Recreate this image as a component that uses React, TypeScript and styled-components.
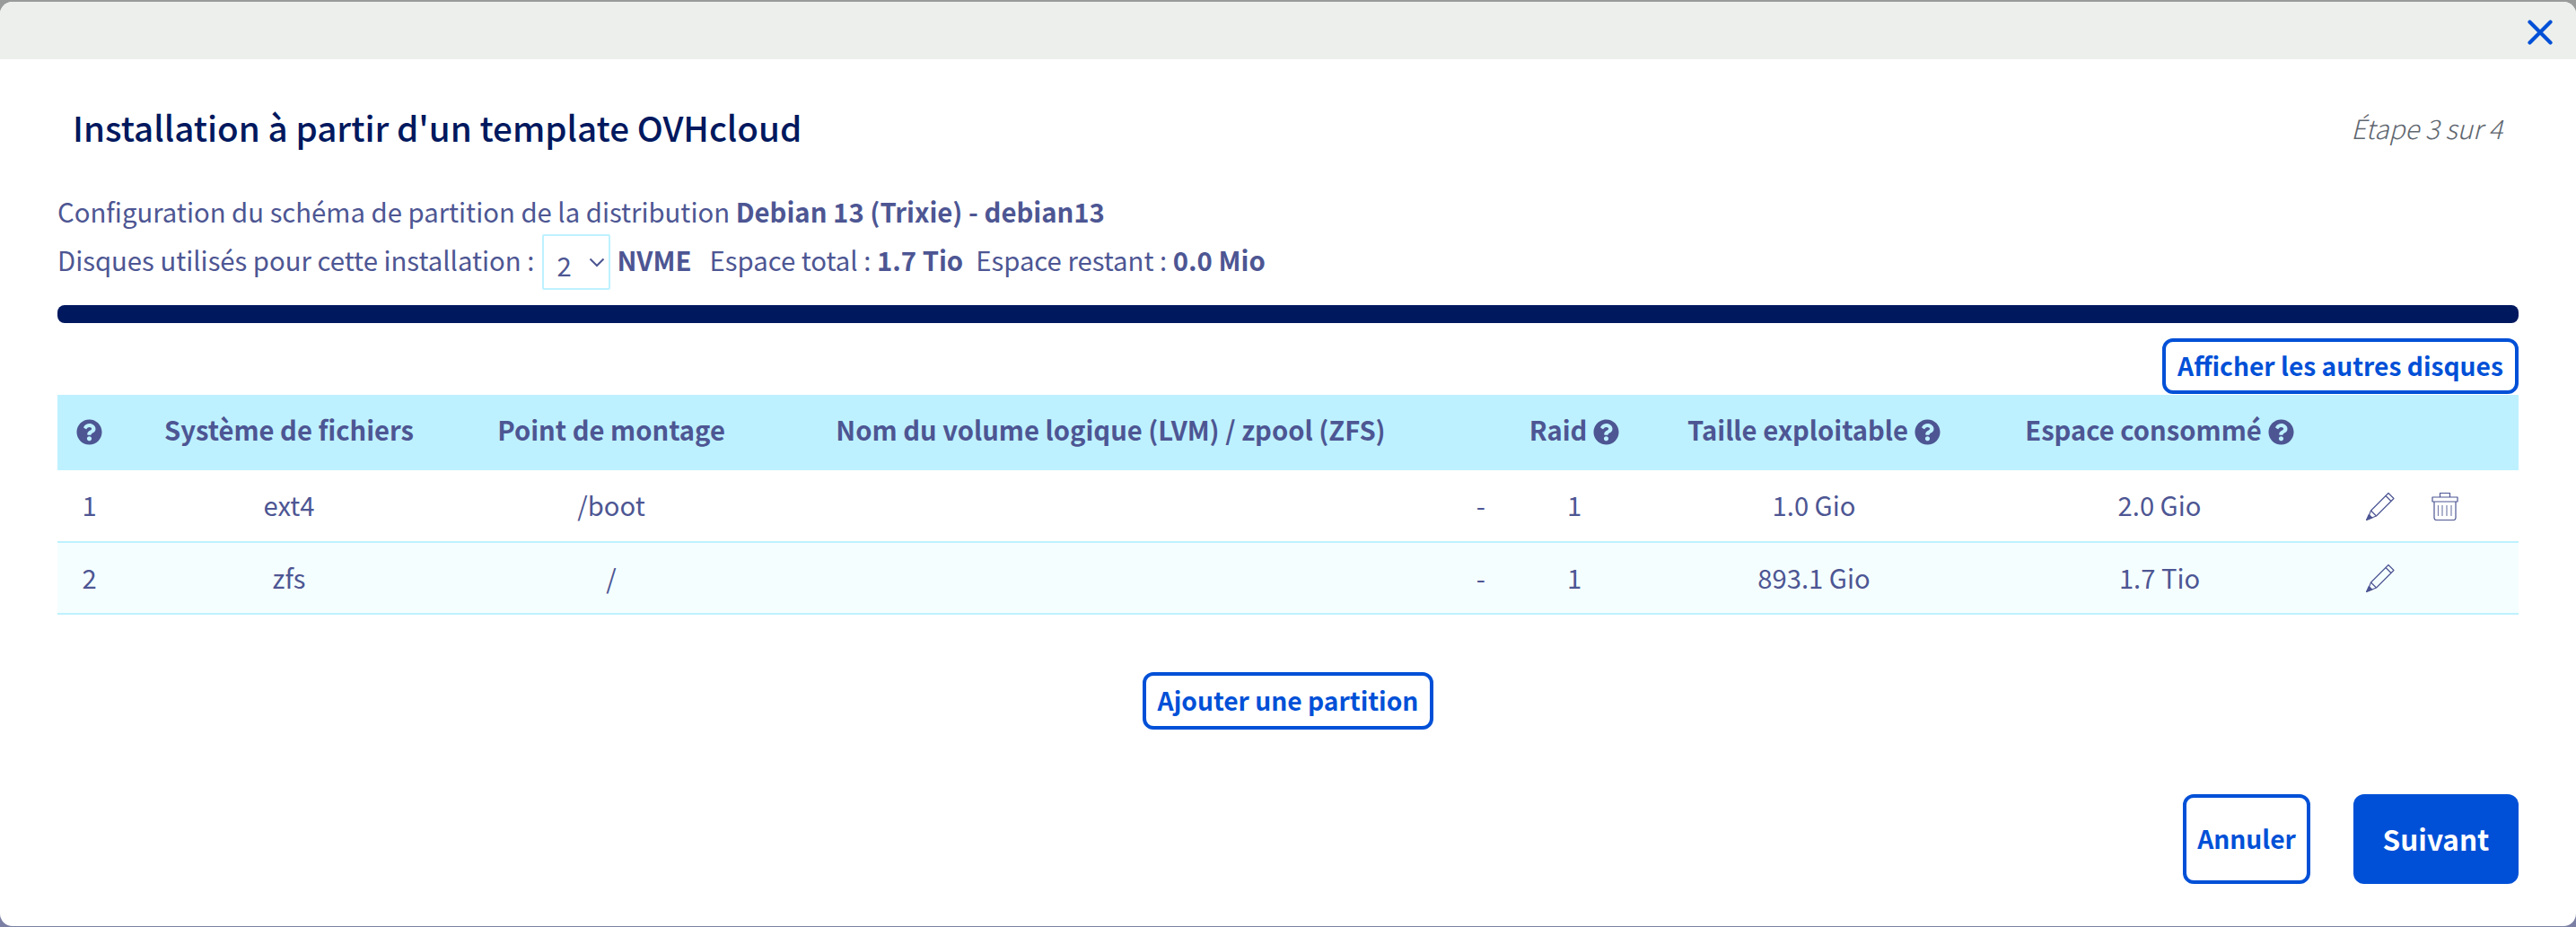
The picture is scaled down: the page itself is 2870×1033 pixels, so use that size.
import React from "react";
import styled, { createGlobalStyle } from "styled-components";
import { FaQuestionCircle } from "react-icons/fa";

const Global = createGlobalStyle`
  html, body { margin: 0; padding: 0; }
  body {
    width: 2870px; height: 1033px; overflow: hidden;
    background: linear-gradient(#999b9b 0, #999b9b 50%, #7c80a4 50%, #7c80a4 100%);
    font-family: "Noto Sans CJK SC", "Open Sans", sans-serif;
    color: #4d5693;
  }
  * { box-sizing: border-box; }
`;

const Modal = styled.div`
  margin-top: 2px; width: 2870px; height: 1030px; background: #fff;
  border-radius: 14px; overflow: hidden; display: flex; flex-direction: column;
`;
const TopBar = styled.div`
  height: 64px; background: #edefec; display: flex; justify-content: flex-end; align-items: center;
  padding-right: 26px; flex: none;
`;
const CloseBtn = styled.svg`
  width: 28px; height: 28px; margin-top: 3px; display: block;
`;
const Body = styled.div`
  padding: 0 64px; display: flex; flex-direction: column; flex: 1;
`;
const TitleRow = styled.div`
  display: flex; justify-content: space-between; align-items: center; height: 100px; margin-top: 26px;
  padding-left: 17px; padding-right: 18px;
`;
const Title = styled.h1`
  margin: 0 0 3px; font-size: 38.6px; font-weight: 500; line-height: 50px; color: #00185e;
`;
const Step = styled.span`
  font-size: 29.6px; font-style: italic; font-weight: 300; color: #5f6770; line-height: 40px; margin-top: 2px;
`;
const Line = styled.div`
  font-size: 29.3px; line-height: 40px; font-weight: 400; margin: 23px 0 2px; white-space: nowrap;
  strong { font-weight: 700; }
`;
const DiskLine = styled.div`
  display: flex; align-items: center; height: 62px; padding-bottom: 6px; font-size: 29.3px; white-space: nowrap; margin-top: 4px;
  strong { font-weight: 700; }
`;
const SelectWrap = styled.div`
  position: relative; width: 76px; height: 62px; margin: 0 7px -6px 9px; flex: none;
`;
const Select = styled.select`
  appearance: none; width: 100%; height: 100%; border: 2px solid #bef1ff; border-radius: 2px; background: #fff;
  color: #4d5693; font: 400 29.3px "Noto Sans CJK SC", sans-serif; padding: 6px 0 0 14px; outline: none;
`;
const Chevron = styled.svg`
  position: absolute; top: 26px; left: 52px; width: 18px; height: 11px; pointer-events: none;
`;
const Gap = styled.span<{ $w: number }>`
  display: inline-block; width: ${(p) => p.$w}px;
`;
const Bar = styled.div`
  height: 20px; background: #00185e; border-radius: 8px; margin-top: 17px; flex: none;
`;
const RightRow = styled.div`
  display: flex; justify-content: flex-end; margin-top: 17px; margin-bottom: 1px;
`;
const OutlineBtn = styled.button`
  border: 4px solid #0050d7; border-radius: 12px; background: #fff; color: #0050d7;
  font: 600 28.2px "Noto Sans CJK SC", sans-serif; display: flex; align-items: center; justify-content: center; padding: 0 0 3px;
`;
const OtherDisks = styled(OutlineBtn)` width: 397px; height: 62px; `;
const Table = styled.table`
  width: 100%; border-collapse: collapse; table-layout: fixed; flex: none;
`;
const Col = styled.col<{ $w: number }>` width: ${(p) => p.$w}px; `;
const Th = styled.th`
  height: 84px; background: #bef1ff; color: #4d5693; font-size: 29.2px; font-weight: 700; text-align: center; padding: 0 0 9px;
  white-space: nowrap;
`;
const NameTh = styled(Th)` padding-right: 49px; `;
const HelpIcon = styled(FaQuestionCircle)`
  width: 29px; height: 29px; vertical-align: -5px; margin-left: 7px; color: #4d5693;
`;
const FirstHelp = styled(HelpIcon)` margin-left: 0; `;
const Row = styled.tr<{ $alt?: boolean }>`
  height: 80px; background: ${(p) => (p.$alt ? "#f5feff" : "#fff")}; border-bottom: 2px solid #bef1ff;
`;
const Td = styled.td`
  font-size: 29.2px; font-weight: 400; text-align: center; padding: 0 0 3px; color: #4d5693;
`;
const DashTd = styled(Td)` text-align: right; padding-right: 16px; `;
const ActionTd = styled(Td)` text-align: left; padding: 0 0 0 29px; `;
const Actions = styled.div` display: flex; gap: 40px; align-items: center; `;
const Icon = styled.svg` width: 32px; height: 32px; display: block; flex: none; `;
const Center = styled.div` display: flex; justify-content: center; margin-top: 64px; `;
const AddBtn = styled(OutlineBtn)` width: 324px; height: 64px; `;
const Footer = styled.div` display: flex; justify-content: flex-end; gap: 48px; margin-top: 72px; `;
const CancelBtn = styled(OutlineBtn)` width: 142px; height: 100px; `;
const NextBtn = styled.button`
  width: 184px; height: 100px; border: 0; border-radius: 12px; background: #0050d7; color: #fff; padding: 0 0 2px;
  font: 600 31.5px "Noto Sans CJK SC", sans-serif;
`;

const Pencil = () => (
  <Icon viewBox="0 0 32 32" fill="none" stroke="#4d5693" strokeWidth="1.2" strokeLinejoin="round">
    <path d="M5.5 21 L25 1.5 L31 7.5 L11.500 27 L1.500 31 Z" />
    <path d="M22 4.500 L28 10.500" />
    <path d="M5.500 21 L11.500 27" />
    <path d="M3.200 25.500 L6.800 29 L0.500 31.500 Z" fill="#4d5693" />
  </Icon>
);
const Trash = () => (
  <Icon viewBox="0 0 32 32" fill="none" stroke="#4d5693" strokeWidth="1.2" strokeLinejoin="round">
    <path d="M2 6 H30 V11 H2 Z" />
    <path d="M10.500 6 V1.500 H21.500 V6" />
    <path d="M4 11 V29 Q4 31.500 6.500 31.500 H25.500 Q28 31.500 28 29 V11" />
    <path d="M8.500 15 V27 M13 15 V27 M18 15 V27 M23 15 V27" stroke="#7a81ad" />
  </Icon>
);

const rows = [
  { n: "1", fs: "ext4", mp: "/boot", size: "1.0 Gio", used: "2.0 Gio", del: true },
  { n: "2", fs: "zfs", mp: "/", size: "893.1 Gio", used: "1.7 Tio", del: false },
];

export default function App() {
  return (
    <>
      <Global />
      <Modal>
        <TopBar>
          <CloseBtn viewBox="0 0 28 28" fill="none" stroke="#0050d7" strokeWidth="4.2" strokeLinecap="round">
            <path d="M2.500 2.500 L25.500 25.500 M25.500 2.500 L2.500 25.500" />
          </CloseBtn>
        </TopBar>
        <Body>
          <TitleRow>
            <Title>Installation à partir d'un template OVHcloud</Title>
            <Step>Étape 3 sur 4</Step>
          </TitleRow>
          <Line>
            Configuration du schéma de partition de la distribution <strong>Debian 13 (Trixie) - debian13</strong>
          </Line>
          <DiskLine>
            Disques utilisés pour cette installation :
            <SelectWrap>
              <Select defaultValue="2">
                <option>1</option>
                <option>2</option>
              </Select>
              <Chevron viewBox="0 0 18 11" fill="none" stroke="#4d5693" strokeWidth="2">
                <path d="M1.500 1.500 L9 9 L16.500 1.500" />
              </Chevron>
            </SelectWrap>
            <strong>NVME</strong>
            <Gap $w={20} />
            Espace total :&nbsp;<strong>1.7 Tio</strong>
            <Gap $w={14} />
            Espace restant :&nbsp;<strong>0.0 Mio</strong>
          </DiskLine>
          <Bar />
          <RightRow>
            <OtherDisks>Afficher les autres disques</OtherDisks>
          </RightRow>
          <Table>
            <colgroup>
              <Col $w={71} />
              <Col $w={374} />
              <Col $w={344} />
              <Col $w={818} />
              <Col $w={166} />
              <Col $w={368} />
              <Col $w={402} />
              <Col $w={199} />
            </colgroup>
            <thead>
              <tr>
                <Th><FirstHelp /></Th>
                <Th>Système de fichiers</Th>
                <Th>Point de montage</Th>
                <NameTh>Nom du volume logique (LVM) / zpool (ZFS)</NameTh>
                <Th>Raid<HelpIcon /></Th>
                <Th>Taille exploitable<HelpIcon /></Th>
                <Th>Espace consommé<HelpIcon /></Th>
                <Th />
              </tr>
            </thead>
            <tbody>
              {rows.map((r, i) => (
                <Row key={r.n} $alt={i % 2 === 1}>
                  <Td>{r.n}</Td>
                  <Td>{r.fs}</Td>
                  <Td>{r.mp}</Td>
                  <DashTd>-</DashTd>
                  <Td>1</Td>
                  <Td>{r.size}</Td>
                  <Td>{r.used}</Td>
                  <ActionTd>
                    <Actions>
                      <Pencil />
                      {r.del && <Trash />}
                    </Actions>
                  </ActionTd>
                </Row>
              ))}
            </tbody>
          </Table>
          <Center>
            <AddBtn>Ajouter une partition</AddBtn>
          </Center>
          <Footer>
            <CancelBtn>Annuler</CancelBtn>
            <NextBtn>Suivant</NextBtn>
          </Footer>
        </Body>
      </Modal>
    </>
  );
}
